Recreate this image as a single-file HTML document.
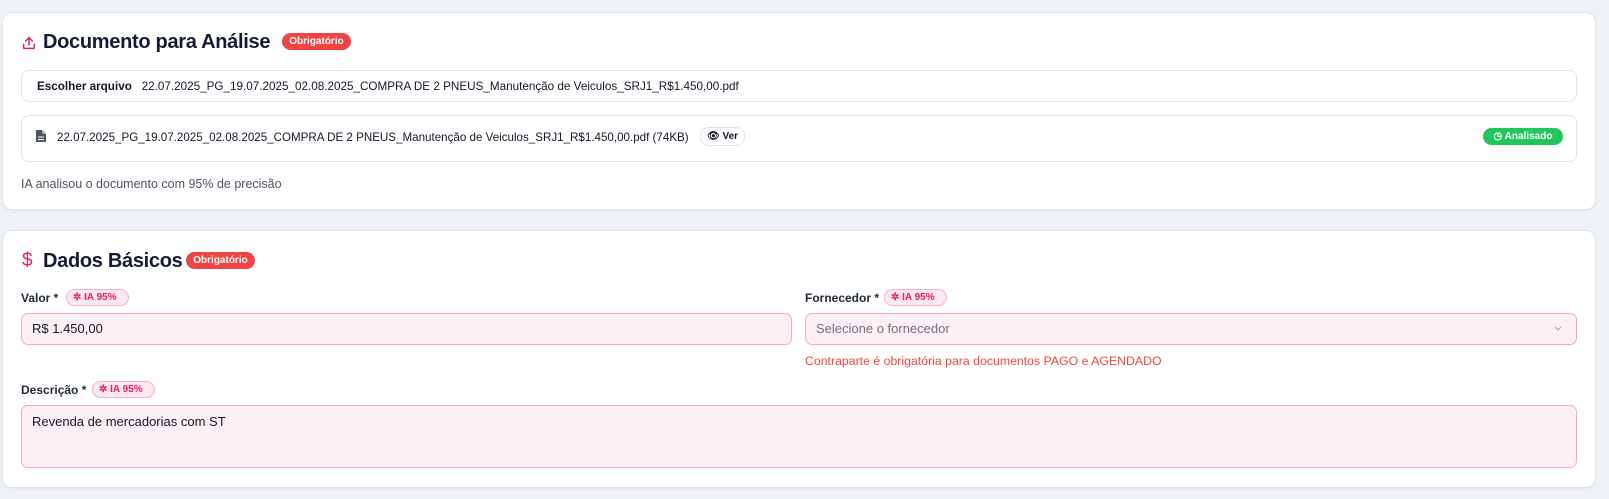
<!DOCTYPE html>
<html><head><meta charset="utf-8"><style>
*{box-sizing:border-box;margin:0;padding:0}
body{width:1609px;height:499px;background:#eef1f6;font-family:"Liberation Sans",sans-serif;color:#111827;position:relative;overflow:hidden}
.card{position:absolute;left:2px;width:1594px;background:#fff;border:1px solid #dfe3ea;border-radius:10px;box-shadow:0 1px 2px rgba(0,0,0,.04)}
.a{position:absolute;white-space:nowrap}
.title{font-size:20px;font-weight:bold;color:#161b33;letter-spacing:-0.3px}
.badge{position:absolute;background:#ef4444;color:#fff;font-size:10px;border-radius:9px;height:17px;line-height:17px;text-align:center;font-weight:bold;white-space:nowrap}
.box{position:absolute;border:1px solid #dfe3ea;border-radius:8px;background:#fff}
.lbl{font-size:12px;color:#1f2937;font-weight:bold}
.ia{position:absolute;height:17px;border:1px solid #f6b3c8;background:#fde8ef;border-radius:9px;color:#e11d63;font-size:10px;font-weight:bold;line-height:15px;padding-left:6px;white-space:nowrap}
.inp{position:absolute;background:#fcf0f4;border:1px solid #f4a9c0;border-radius:7px;font-size:13px;padding-left:10px}
</style></head><body>
<div class="card" style="top:12px;height:198px"></div>
<svg class="a" style="left:21px;top:35px" width="16" height="16" viewBox="0 0 24 24" fill="none" stroke="#e11d63" stroke-width="2.2" stroke-linecap="round" stroke-linejoin="round"><path d="M4 14v5a1 1 0 0 0 1 1h14a1 1 0 0 0 1-1v-5"/><path d="M12 15V4M7 9l5-5 5 5"/></svg>
<div class="a title" style="left:43px;top:31px">Documento para Análise</div>
<div class="badge" style="left:282px;top:33px;width:69px">Obrigatório</div>
<div class="box" style="left:21px;top:70px;width:1556px;height:32px"></div>
<div class="a" style="left:37px;top:80px;font-size:11.7px"><b>Escolher arquivo</b>&nbsp;&nbsp; 22.07.2025_PG_19.07.2025_02.08.2025_COMPRA DE 2 PNEUS_Manutenção de Veiculos_SRJ1_R$1.450,00.pdf</div>
<div class="box" style="left:21px;top:115px;width:1556px;height:47px"></div>
<svg class="a" style="left:35px;top:129px" width="12" height="14" viewBox="0 0 12 14"><path d="M1 1h6l4 4v8H1z" fill="#4b5563"/><path d="M7 1v4h4" fill="#9ca3af"/><path d="M3 8h6M3 10.5h6" stroke="#fff" stroke-width="1"/></svg>
<div class="a" style="left:57px;top:131px;font-size:11.6px">22.07.2025_PG_19.07.2025_02.08.2025_COMPRA DE 2 PNEUS_Manutenção de Veiculos_SRJ1_R$1.450,00.pdf (74KB)</div>
<div class="a" style="left:700px;top:127px;width:45px;height:19px;border:1px solid #dfe3ea;border-radius:9px;font-size:10px;font-weight:bold;line-height:17px;padding-left:6px;background:#fff">👁 Ver</div>
<div class="badge" style="left:1483px;top:128px;width:80px;background:#22c55e">◷ Analisado</div>
<div class="a" style="left:21px;top:177px;font-size:12.5px;color:#4b5563">IA analisou o documento com 95% de precisão</div>

<div class="card" style="top:230px;height:258px"></div>
<div class="a" style="left:22px;top:250px;color:#e11d63;font-size:19px">$</div>
<div class="a title" style="left:43px;top:250px">Dados Básicos</div>
<div class="badge" style="left:186px;top:252px;width:69px">Obrigatório</div>
<div class="a lbl" style="left:21px;top:291px">Valor *</div>
<div class="ia" style="left:66px;top:289px;width:63px">✲ IA 95%</div>
<div class="inp" style="left:21px;top:313px;width:771px;height:32px;line-height:30px">R$ 1.450,00</div>
<div class="a lbl" style="left:805px;top:291px">Fornecedor *</div>
<div class="ia" style="left:884px;top:289px;width:63px">✲ IA 95%</div>
<div class="inp" style="left:805px;top:313px;width:772px;height:32px;line-height:30px;color:#6b7280">Selecione o fornecedor</div>
<svg class="a" style="left:1553px;top:325px" width="10" height="8" viewBox="0 0 10 8"><path d="M2 2l3 3 3-3" stroke="#9ca3af" fill="none"/></svg>
<div class="a" style="left:805px;top:354px;font-size:12.3px;color:#ef4444">Contraparte é obrigatória para documentos PAGO e AGENDADO</div>
<div class="a lbl" style="left:21px;top:383px">Descrição *</div>
<div class="ia" style="left:92px;top:381px;width:63px">✲ IA 95%</div>
<div class="inp" style="left:21px;top:405px;width:1556px;height:63px;padding-top:8px">Revenda de mercadorias com ST</div>
</body></html>
